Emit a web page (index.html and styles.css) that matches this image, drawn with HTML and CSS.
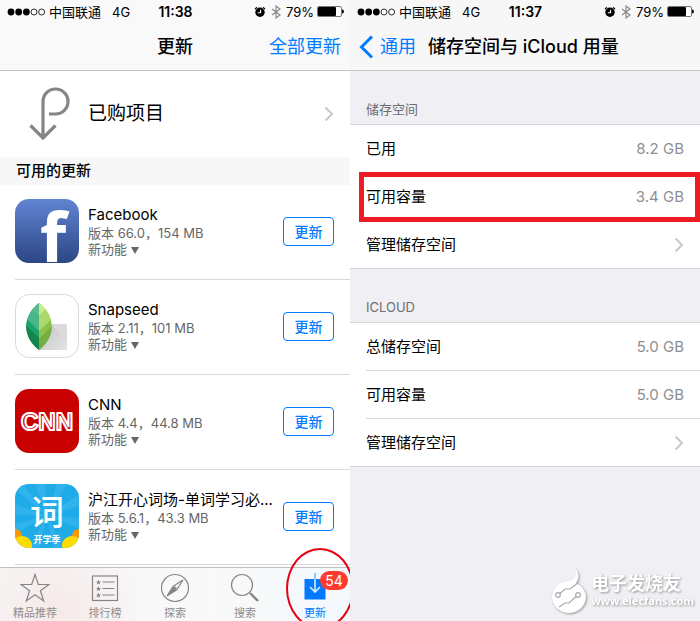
FILE: index.html
```
<!DOCTYPE html>
<html lang="zh-CN">
<head>
  <meta charset="UTF-8">
  <meta name="viewport" content="width=device-width, initial-scale=1">
  <title>更新 / 储存空间</title>
  <link rel="stylesheet" href="styles.css">
</head>
<body>
  <!-- shared icons -->
  <svg class="sprite" width="0" height="0" aria-hidden="true">
    <symbol id="signal" viewBox="0 0 38 8">
      <circle cx="4" cy="4" r="3.4"/><circle cx="11.7" cy="4" r="3.4"/><circle cx="19.4" cy="4" r="3.4"/>
      <g fill="none" stroke="#000" stroke-width=".8"><circle cx="27" cy="4" r="3"/><circle cx="34.6" cy="4" r="3"/></g>
    </symbol>
    <symbol id="alarm" viewBox="0 0 12 12">
      <circle cx="6" cy="6.3" r="4.7"/>
      <path d="M1.4 2.8 2.6 1.6M10.600 2.800 9.400 1.600" stroke="#000" stroke-width="1.3" stroke-linecap="round"/>
      <path d="M6.6 3.8v3H3.8" fill="none" stroke="#fff" stroke-width="1.1"/>
    </symbol>
    <symbol id="bluetooth" viewBox="0 0 10 14">
      <path d="M1 4l8 6-4 3V1l4 3-8 6" fill="none" stroke="#888" stroke-width="1.200"/>
    </symbol>
    <symbol id="battery" viewBox="0 0 27 11">
      <rect x=".5" y=".5" width="24" height="10" rx="1.5" fill="#fff" stroke="#777"/>
      <rect x="1" y="1" width="18" height="9" rx="1"/>
      <path d="M25 3.500q2 0 2 2t-2 2z"/>
    </symbol>
    <symbol id="chevron" viewBox="0 0 10 16">
      <path d="M1.500 1.500 8 8l-6.500 6.500" fill="none" stroke="#c7c7cc" stroke-width="2"/>
    </symbol>
  </svg>

  <main class="screens">
    <section class="phone store">
      <header class="topbar">
        <div class="status">
          <div class="status-left">
            <svg class="signal"><use href="#signal"/></svg>
            <span>中国联通</span><span class="network">4G</span>
          </div>
          <time>11:38</time>
          <div class="status-right">
            <svg class="alarm"><use href="#alarm"/></svg>
            <svg class="bluetooth"><use href="#bluetooth"/></svg>
            <span>79%</span>
            <svg class="battery"><use href="#battery"/></svg>
          </div>
        </div>
        <div class="nav nav-store">
          <h1>更新</h1>
          <button class="update-all">全部更新</button>
        </div>
      </header>

      <a class="purchased" href="#">
        <svg class="purchased-icon" viewBox="0 0 42 56" fill="none" stroke="#858585" stroke-width="3.200">
          <path d="M15 53V15.500a12.500 12.500 0 1 1 12.500 12.500H21M2.500 39.500 15 52l12.500-12.500"/>
        </svg>
        <span>已购项目</span>
        <svg class="chevron"><use href="#chevron"/></svg>
      </a>

      <h2 class="section-title">可用的更新</h2>
      <ul class="apps">
        <li class="app">
          <svg class="app-icon" viewBox="0 0 64 64">
            <defs><linearGradient id="fb" x2="0" y2="1"><stop stop-color="#6184d2"/><stop offset="1" stop-color="#2c4685"/></linearGradient></defs>
            <rect width="64" height="64" rx="14" fill="url(#fb)"/>
            <text class="fb-mark" x="25" y="63">f</text>
          </svg>
          <div class="app-info">
            <h3>Facebook</h3>
            <p>版本 66.0，154 MB</p>
            <p>新功能 <i class="caret"></i></p>
          </div>
          <button class="update">更新</button>
        </li>
        <li class="app">
          <svg class="app-icon" viewBox="0 0 64 64">
            <defs>
              <clipPath id="leaf"><path d="M24 9c17 13 17 34 0 47C7 43 7 22 24 9z"/></clipPath>
              <linearGradient id="card" x2="1" y2="1"><stop stop-color="#c2c2c2"/><stop offset="1" stop-color="#e4e4e4"/></linearGradient>
            </defs>
            <rect x=".5" y=".5" width="63" height="63" rx="14" fill="#fff" stroke="#d9d9d9"/>
            <rect x="26" y="30" width="26" height="26" rx="2" fill="#dadada"/>
            <path d="M36 30 52 47v7q0 2-2 2H24z" fill="url(#card)"/>
            <g clip-path="url(#leaf)">
              <path d="M8 5h16v55H8z" fill="#21a366"/>
              <path d="M24 5v18L8 7z" fill="#58ba91"/>
              <path d="M24 22v16L8 22V6z" fill="#4bb58b"/>
              <path d="M24 37v8L8 29v-8z" fill="#1da466"/>
              <path d="M24 44v16H8V28z" fill="#15864b"/>
              <path d="M24 5h16v55H24z" fill="#8bc34a"/>
              <path d="M24 5h16v1L24 22z" fill="#c5ee8b"/>
              <path d="M24 22 40 6v16L24 37z" fill="#acd96b"/>
              <path d="M24 45 40 29v31H24z" fill="#75ad43"/>
            </g>
          </svg>
          <div class="app-info">
            <h3>Snapseed</h3>
            <p>版本 2.11，101 MB</p>
            <p>新功能 <i class="caret"></i></p>
          </div>
          <button class="update">更新</button>
        </li>
        <li class="app">
          <svg class="app-icon" viewBox="0 0 64 64">
            <rect width="64" height="64" rx="14" fill="#c90000"/>
            <text class="cnn-mark" x="32" y="41">CNN</text>
          </svg>
          <div class="app-info">
            <h3>CNN</h3>
            <p>版本 4.4，44.8 MB</p>
            <p>新功能 <i class="caret"></i></p>
          </div>
          <button class="update">更新</button>
        </li>
        <li class="app">
          <svg class="app-icon" viewBox="0 0 64 64">
            <defs><clipPath id="tile"><rect width="64" height="64" rx="14"/></clipPath></defs>
            <g clip-path="url(#tile)">
              <rect width="64" height="64" fill="#1faae8"/>
              <g fill="#30b3ec">
                <path d="M32 32 0 6v-6h8zM32 32 20 0h10zM32 32 42 0h10zM32 32 64 10v12zM32 32l32 2v10zM32 32 0 20v10zM32 32 0 40v10zM32 32 14 64h10zM32 32l6 32h10z"/>
              </g>
              <circle cx="0" cy="52" r="7" fill="#ff9800"/><circle cx="64" cy="52" r="7" fill="#ff9800"/>
              <ellipse cx="7" cy="61" rx="10" ry="9" fill="#ffdc00"/><ellipse cx="57" cy="61" rx="10" ry="9" fill="#ffdc00"/>
            </g>
            <text class="word-mark" x="32" y="41">词</text>
            <text class="word-sub" x="32" y="59">开学季</text>
          </svg>
          <div class="app-info">
            <h3>沪江开心词场-单词学习必...</h3>
            <p>版本 5.6.1，43.3 MB</p>
            <p>新功能 <i class="caret"></i></p>
          </div>
          <button class="update">更新</button>
        </li>
      </ul>

      <nav class="tabs">
        <a href="#">
          <svg viewBox="0 0 30 30"><path d="M15 1.500l3.300 10H29l-8.600 6.300 3.300 10.200L15 21.700 6.300 28l3.300-10.200L1 11.500h10.700z"/></svg>
          <span>精品推荐</span>
        </a>
        <a href="#">
          <svg viewBox="0 0 30 30">
            <rect x="2.500" y="3" width="25" height="24.500"/>
            <path d="M12.500 9h12M12.500 15.500h12M12.500 22h12"/>
            <path class="solid" d="M8.500 6.500l.7 1.900h2l-1.600 1.200.6 2-1.700-1.200-1.700 1.200.6-2-1.600-1.200h2zM8.500 13l.7 1.900h2l-1.600 1.200.6 2-1.700-1.200-1.700 1.200.6-2-1.600-1.200h2zM8.500 19.500l.7 1.900h2l-1.600 1.200.6 2-1.700-1.200-1.700 1.200.6-2-1.600-1.200h2z"/>
          </svg>
          <span>排行榜</span>
        </a>
        <a href="#">
          <svg viewBox="0 0 30 30">
            <circle cx="15" cy="15" r="13.500"/>
            <path d="M23 7 16.800 16.800 7 23l6.200-9.800z"/>
            <path class="solid" d="M7 23l6.200-9.800 3.600 3.600z"/><circle cx="15" cy="15" r="1" fill="#fff"/>
          </svg>
          <span>探索</span>
        </a>
        <a href="#">
          <svg viewBox="0 0 30 30"><circle cx="12" cy="12" r="10.500"/><path d="M19.500 19.500l2 2"/><path d="M20.500 20.500l7.500 7.500" stroke-width="2.400"/></svg>
          <span>搜索</span>
        </a>
        <a class="active" href="#">
          <svg viewBox="0 0 30 30">
            <rect x="4.500" y="6" width="21" height="20.500" fill="#007aff" stroke="none"/>
            <path d="M15 0v6" stroke="#78b8ff" stroke-width="1.600"/>
            <path d="M15 6v13M10 14l5 5 5-5" stroke="#d9ebff" stroke-width="1.600"/>
          </svg>
          <b class="badge">54</b>
          <span>更新</span>
        </a>
      </nav>
    </section>

    <section class="phone settings">
      <header class="topbar">
        <div class="status">
          <div class="status-left">
            <svg class="signal"><use href="#signal"/></svg>
            <span>中国联通</span><span class="network">4G</span>
          </div>
          <time>11:37</time>
          <div class="status-right">
            <svg class="alarm"><use href="#alarm"/></svg>
            <svg class="bluetooth"><use href="#bluetooth"/></svg>
            <span>79%</span>
            <svg class="battery"><use href="#battery"/></svg>
          </div>
        </div>
        <div class="nav">
          <a class="back" href="#">
            <svg viewBox="0 0 15 24"><path d="M13 1.500 2.500 12 13 22.500" fill="none" stroke="#007aff" stroke-width="3"/></svg>
            通用
          </a>
          <h1>储存空间与 iCloud 用量</h1>
        </div>
      </header>

      <h2 class="group-title">储存空间</h2>
      <ul class="group">
        <li><span>已用</span><span class="value">8.2 GB</span></li>
        <li class="marked"><span>可用容量</span><span class="value">3.4 GB</span></li>
        <li><a href="#">管理储存空间<svg class="chevron"><use href="#chevron"/></svg></a></li>
      </ul>

      <h2 class="group-title">ICLOUD</h2>
      <ul class="group">
        <li><span>总储存空间</span><span class="value">5.0 GB</span></li>
        <li><span>可用容量</span><span class="value">5.0 GB</span></li>
        <li><a href="#">管理储存空间<svg class="chevron"><use href="#chevron"/></svg></a></li>
      </ul>

      <footer class="watermark">
        <svg viewBox="0 0 38 48">
          <path d="M25 1c5 6 4 11 1 15 6 3 10 8 10 14 0 9-8 16-17 16S2 39 2 30s8-16 16-16c6-1 9-4 7-13z" fill="#fff"/>
          <g fill="none" stroke="#a9a9ae" stroke-width="1.200">
            <circle cx="8" cy="28" r="2.300"/><path d="M10 26.500l5-4.500h5l8-6"/>
            <circle cx="28" cy="28" r="2.300"/><path d="M26 29.500 19 36h-4l-6 4"/>
          </g>
        </svg>
        <div>
          <strong>电子发烧友</strong>
          <small>www.elecfans.com</small>
        </div>
      </footer>
    </section>
  </main>
</body>
</html>
```
FILE: styles.css
```
* { box-sizing: border-box; margin: 0; padding: 0; }
body {
  font-family: Inter, "Noto Sans CJK SC", sans-serif;
  color: #000;
  background: #fff;
}
ul { list-style: none; }
a { color: inherit; text-decoration: none; }
button { font-family: inherit; cursor: pointer; }
svg { display: block; flex: none; }
.sprite { position: absolute; }

.screens {
  display: grid;
  grid-template-columns: 1fr 1fr;
  min-height: 100vh;
}
.phone {
  display: flex; flex-direction: column;
  min-width: 0;
  overflow: hidden;
}
.store { background: #fff; }
.settings { background: #efeff4; }

/* top bar */
.topbar { background: #f9f9f9; border-bottom: 1px solid #c4c4c6; }
.settings .topbar { background: #f7f7f8; }
.status {
  display: grid; grid-template-columns: 1fr auto 1fr; align-items: center;
  height: 23px; padding: 0 6px 0 7px;
  font-size: 13px; line-height: 22px;
}
.status-left, .status-right { display: flex; align-items: center; }
.status-right { justify-content: flex-end; }
.status time { font-size: 14px; font-weight: 600; }
.signal { width: 38px; height: 8px; margin-right: 4px; }
.network { margin-left: 11px; }
.alarm { width: 12px; height: 12px; margin-right: 5px; }
.bluetooth { width: 10px; height: 14px; margin-right: 5px; }
.battery { width: 27px; height: 11px; margin-left: 3px; }

.nav {
  display: flex; align-items: center; gap: 12px;
  height: 47px; padding: 0 9px;
  font-size: 18px; line-height: 24px;
}
.nav h1 { font-size: 18px; font-weight: 500; white-space: nowrap; }
.nav-store { display: grid; grid-template-columns: 1fr auto 1fr; gap: 0; }
.nav-store h1 { grid-column: 2; }
.update-all {
  justify-self: end;
  border: none; background: none;
  color: #007aff; font-size: 18px; line-height: 24px;
}
.back {
  display: flex; align-items: center; gap: 6px;
  color: #007aff; white-space: nowrap;
}
.back svg { width: 15px; height: 24px; }
.chevron { width: 10px; height: 16px; margin-left: auto; }

/* store */
.purchased {
  display: flex; align-items: center;
  height: 86px; padding: 0 16px 0 28px;
  font-size: 19px; line-height: 28px;
}
.purchased-icon { width: 42px; height: 56px; margin-right: 18px; }
.section-title {
  height: 28px; padding-left: 16px;
  background: #f7f7f7;
  font-size: 15px; font-weight: 500; line-height: 28px;
}
.apps { flex: 1; padding: 0 0 2px 15px; }
.app {
  display: flex; align-items: flex-start;
  height: 95px; padding: 14px 16px 0 0;
  border-bottom: 1px solid #d9d9d9;
}
.app-icon { width: 64px; height: 64px; margin-right: 9px; }
.app-info { flex: 1; min-width: 0; padding: 6px 8px 0 0; }
.app-info h3 {
  font-size: 15px; font-weight: 400; line-height: 20px;
  white-space: nowrap;
}
.app-info p { color: #666; font-size: 13px; line-height: 16px; }
.caret {
  display: inline-block;
  border: 4px solid transparent; border-top: 7px solid #666; border-bottom: 0;
}
.update {
  width: 51px; height: 29px; margin-top: 18px;
  border: 1px solid #007aff; border-radius: 4px;
  background: #fff; color: #007aff;
  font-size: 14px; font-weight: 500; line-height: 20px;
}
.fb-mark { font: 700 68px "Open Sans", sans-serif; fill: #fff; }
.cnn-mark {
  font: 700 24px "Liberation Sans", sans-serif;
  fill: #c90000; stroke: #fff; stroke-width: 2; stroke-linejoin: round;
  text-anchor: middle;
}
.word-mark, .word-sub {
  font-family: "Noto Sans CJK SC", sans-serif; font-weight: 700;
  fill: #fff; text-anchor: middle;
}
.word-mark { font-size: 34px; font-weight: 500; }
.word-sub { font-size: 9px; }

/* tab bar */
.tabs {
  display: grid; grid-template-columns: repeat(5, 1fr);
  height: 54px;
  border-top: 1px solid #c0c0c0;
  background: radial-gradient(circle at 17% 80%, #f6e9e9, transparent 30%), linear-gradient(90deg, #f7f6f6, #f9f9f9 60%, #f3f8fc);
  color: #8e8e8e;
}
.tabs a {
  position: relative;
  display: flex; flex-direction: column; align-items: center;
  padding-top: 5px;
  font-size: 11px; line-height: 16px;
}
.tabs svg { width: 30px; height: 30px; margin-bottom: 2px; fill: none; stroke: #858585; stroke-width: 1.2; }
.tabs .solid { fill: #858585; stroke: none; }
.tabs .active { color: #007aff; }
.badge {
  position: absolute; top: 3px; left: 40px;
  min-width: 28px; padding: 0 5px;
  border-radius: 10px;
  background: #ff3b30; color: #fff;
  font-size: 14px; font-weight: 400; line-height: 19px; text-align: center;
}
.active::after {
  content: "";
  position: absolute; top: -20px; left: 6px;
  width: 64px; height: 77px;
  border: 2px solid #e60012; border-radius: 50%;
}

/* settings */
.group-title {
  padding: 28px 16px 5px;
  color: #6d6d72;
  font-size: 13px; font-weight: 400; line-height: 20px;
}
.group {
  padding-left: 16px;
  background: #fff;
  border-top: 1px solid #d4d4d9; border-bottom: 1px solid #d4d4d9;
}
.group li {
  position: relative;
  display: flex; justify-content: space-between; align-items: center;
  height: 48px; padding-right: 16px;
  border-bottom: 1px solid #d4d4d9;
  font-size: 15px; line-height: 24px;
}
.group li:last-child { height: 47px; border-bottom: none; }
.group a { display: flex; flex: 1; align-items: center; }
.value { color: #8e8e93; }
.marked::after {
  content: "";
  position: absolute; inset: -1px 0 -2px -7px;
  border: 5px solid #ed1c24;
}

.watermark {
  display: flex; align-items: center; gap: 3px;
  margin: auto 6px 6px auto;
  color: #fff;
  filter: drop-shadow(1px 1px 1px #999);
}
.watermark svg { width: 38px; height: 48px; }
.watermark strong { display: block; font-size: 18px; line-height: 20px; }
.watermark small { display: block; font: 700 11px/14px "Noto Sans", sans-serif; }
```
